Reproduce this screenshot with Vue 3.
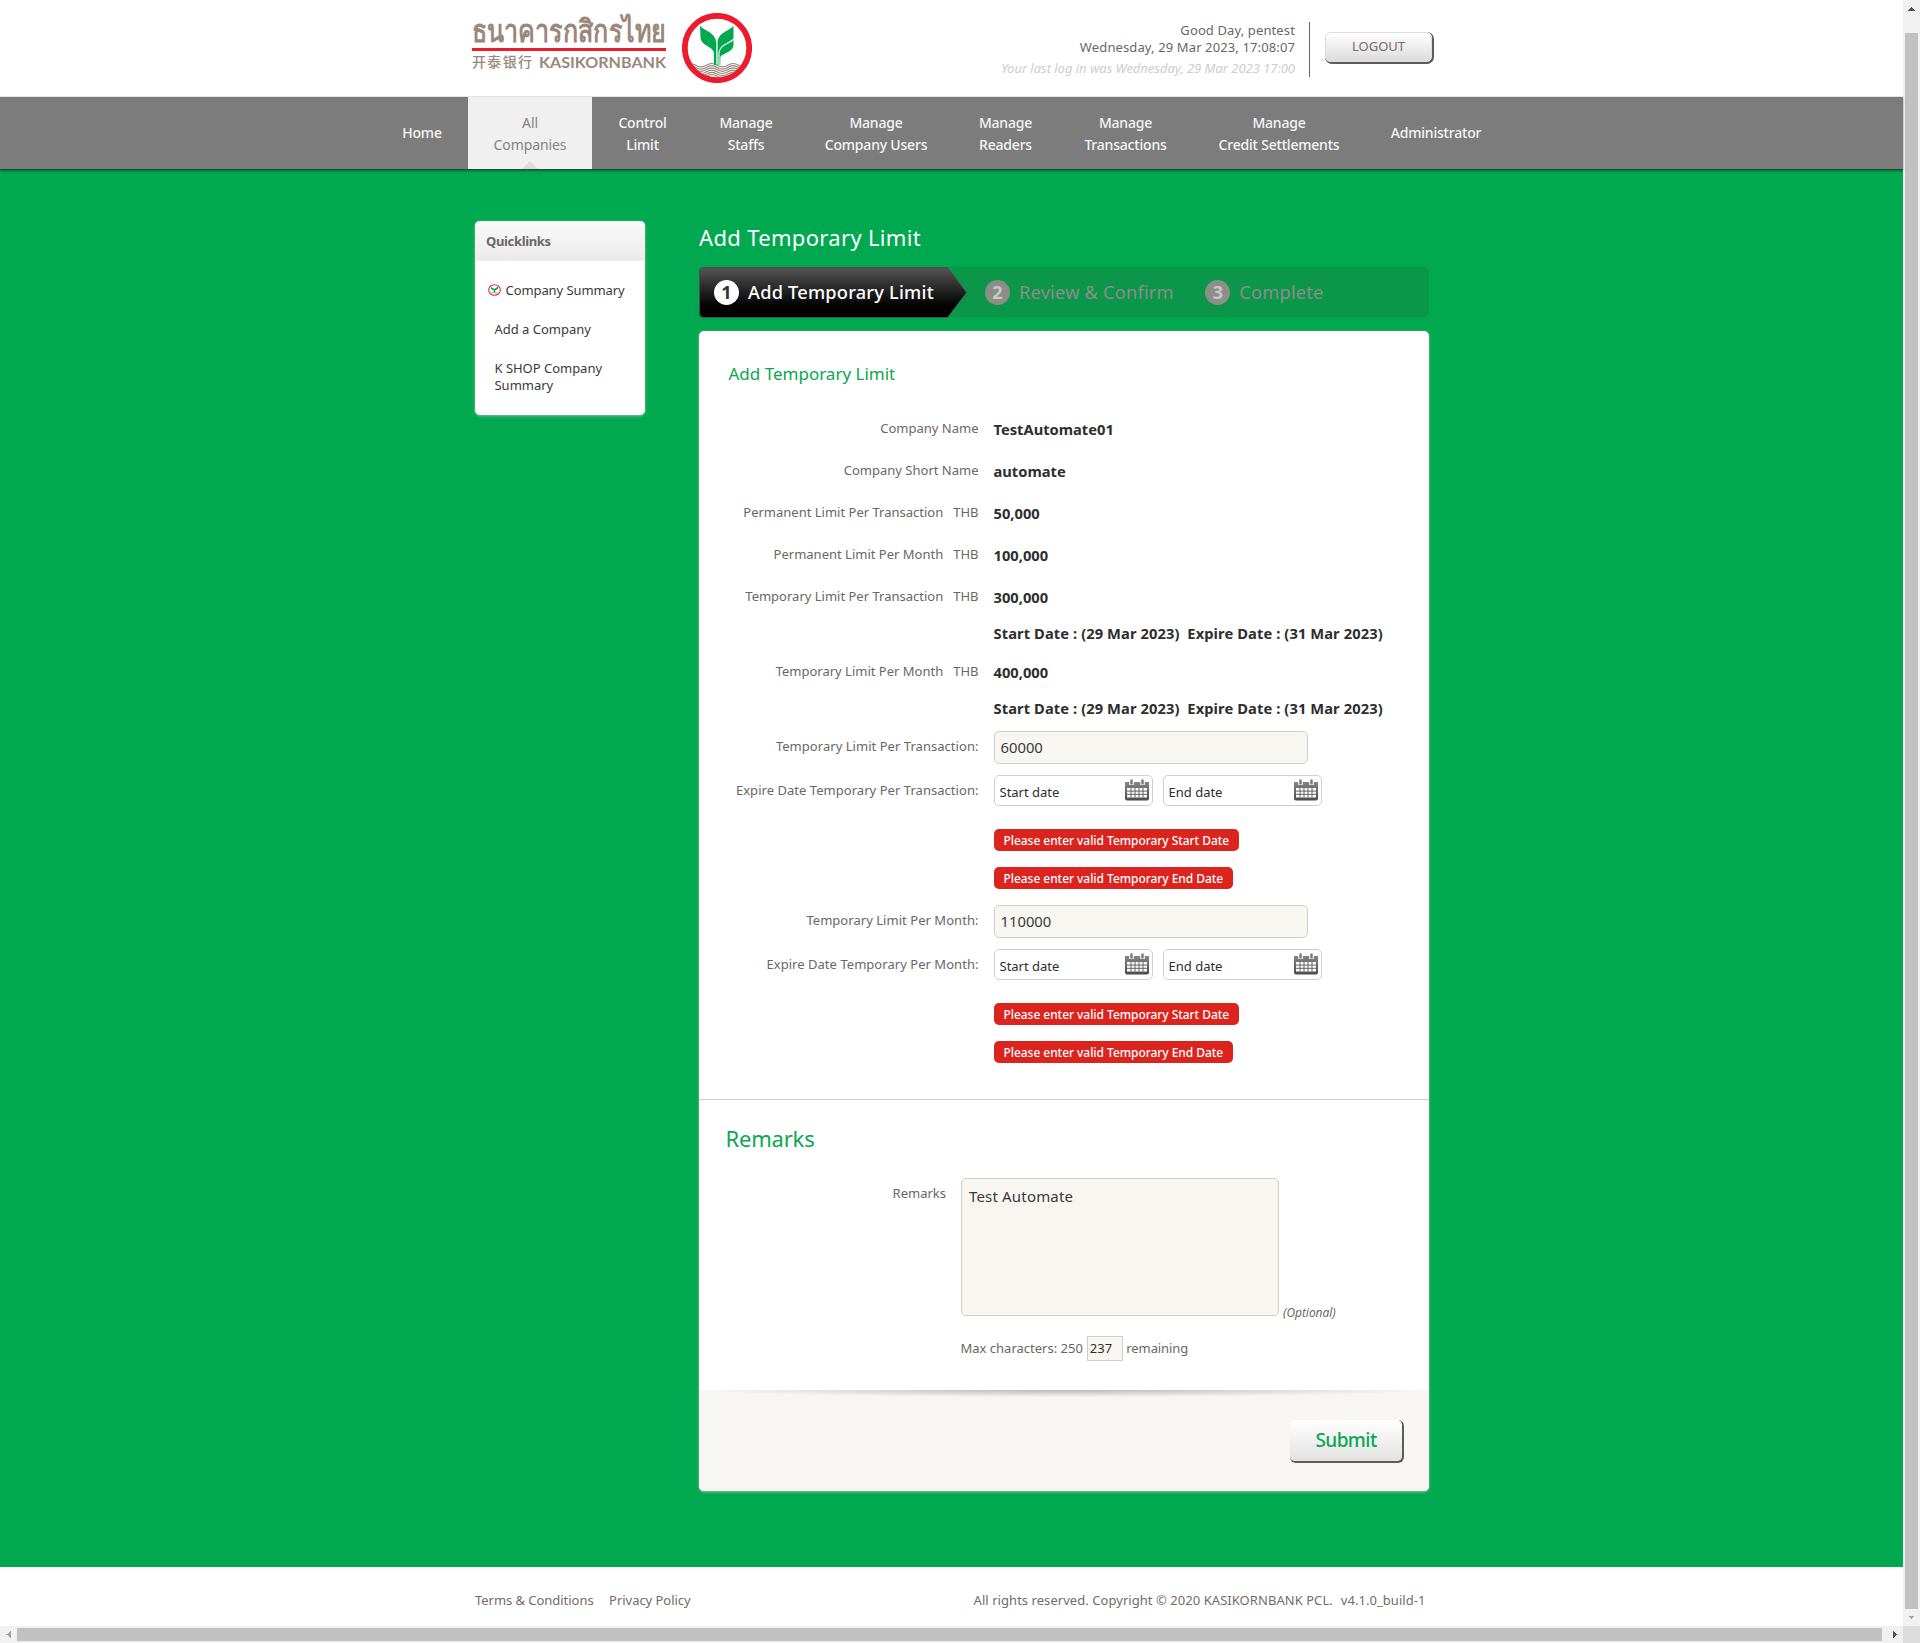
<script setup>
import { ref } from 'vue'

const navItems = [
  { lines: ['Home'], width: 92 },
  { lines: ['All', 'Companies'], width: 124, active: true },
  { lines: ['Control', 'Limit'], width: 101 },
  { lines: ['Manage', 'Staffs'], width: 106 },
  { lines: ['Manage', 'Company Users'], width: 154 },
  { lines: ['Manage', 'Readers'], width: 105 },
  { lines: ['Manage', 'Transactions'], width: 135 },
  { lines: ['Manage', 'Credit Settlements'], width: 172 },
  { lines: ['Administrator'], width: 142 },
]

const steps = ['Add Temporary Limit', 'Review & Confirm', 'Complete']

const period = 'Start Date : (29 Mar 2023)  Expire Date : (31 Mar 2023)'
const details = [
  { label: 'Company Name', value: 'TestAutomate01' },
  { label: 'Company Short Name', value: 'automate' },
  { label: 'Permanent Limit Per Transaction', unit: 'THB', value: '50,000' },
  { label: 'Permanent Limit Per Month', unit: 'THB', value: '100,000' },
  { label: 'Temporary Limit Per Transaction', unit: 'THB', value: '300,000', period },
  { label: 'Temporary Limit Per Month', unit: 'THB', value: '400,000', period },
]

const limits = ref([
  { label: 'Temporary Limit Per Transaction:', dateLabel: 'Expire Date Temporary Per Transaction:', amount: '60000' },
  { label: 'Temporary Limit Per Month:', dateLabel: 'Expire Date Temporary Per Month:', amount: '110000' },
])
const errors = ['Please enter valid Temporary Start Date', 'Please enter valid Temporary End Date']
const remarks = ref('Test Automate')
</script>

<template>
  <div class="window">
    <div class="viewport">
      <div class="page">
        <header class="header">
          <div class="brand">
            <svg class="wordmark" width="196" height="62" viewBox="0 0 196 62">
              <text class="thai" x="0" y="32" textLength="194" lengthAdjust="spacingAndGlyphs">ธนาคารกสิกรไทย</text>
              <rect x="0" y="38" width="194" height="3" fill="#ec1c2e" />
              <text class="chinese" x="0" y="57" textLength="60">开泰银行</text>
              <text class="latin" x="67" y="58" textLength="127" lengthAdjust="spacingAndGlyphs">KASIKORNBANK</text>
            </svg>
            <svg class="emblem" width="70" height="70" viewBox="0 0 70 70">
              <clipPath id="disc"><circle cx="35" cy="35" r="29.5" /></clipPath>
              <circle cx="35" cy="35" r="32.2" fill="#fff" stroke="#ec1c2e" stroke-width="5.8" />
              <g clip-path="url(#disc)" fill="none" stroke="#98857a" stroke-width="1.15">
                <path v-for="n in 6" :key="n" :d="`M3 ${50 + n * 2.2} q5.3 -3.4 10.7 0 t10.7 0 t10.7 0 t10.7 0 t10.7 0 t10.7 0`" />
              </g>
              <g fill="#00a950">
                <path d="M18 12.5 C22 18 33 19 34.3 29 V52 H32 V40 C31 33 18.5 33 18.5 24 Z" />
                <path d="M51.5 12.5 C48 18 36.5 19 35.6 29 V52 H38.3 V44 C41 40 51.5 39 51.5 32 Z" />
              </g>
              <path d="M52 26 C47 31 38 31 37 40 V52" fill="none" stroke="#fff" stroke-width="1.1" />
            </svg>
          </div>
          <div class="session">
            <div class="greeting">
              <div>Good Day, pentest</div>
              <div>Wednesday, 29 Mar 2023, 17:08:07</div>
              <div class="last-login">Your last log in was Wednesday, 29 Mar 2023 17:00</div>
            </div>
            <button class="logout">LOGOUT</button>
          </div>
        </header>

        <nav class="nav">
          <a
            v-for="item in navItems"
            :key="item.lines.join(' ')"
            class="nav-item"
            :class="{ active: item.active, double: item.lines.length > 1 }"
            :style="{ width: item.width + 'px' }"
          >
            <span v-for="line in item.lines" :key="line">{{ line }}</span>
          </a>
        </nav>

        <main class="main">
          <aside class="quicklinks">
            <h3>Quicklinks</h3>
            <ul>
              <li class="current">
                <svg width="13" height="12" viewBox="0 0 13 12">
                  <ellipse cx="6.5" cy="6" rx="5.8" ry="5.3" fill="#fff" stroke="#e02a42" stroke-width="1.1" />
                  <path d="M3.6 8.6 q1.5 -.9 2.9 0 t2.9 0" fill="none" stroke="#98a39a" />
                  <path d="M3 3 L6.4 4.9 L10 2.6 V5 L7.2 6.6 V8.4 H5.8 V6.6 L3 5 Z" fill="#00a950" />
                </svg>
                <span>Company Summary</span>
              </li>
              <li>Add a Company</li>
              <li>K SHOP Company<br />Summary</li>
            </ul>
          </aside>

          <section class="content">
            <h1>Add Temporary Limit</h1>
            <ol class="steps">
              <li v-for="(step, i) in steps" :key="step" :class="{ active: i === 0 }">
                <svg v-if="i === 0" class="arrow" width="269" height="51" viewBox="0 0 269 51">
                  <defs>
                    <linearGradient id="step-fill" x1="0" y1="0" x2="0" y2="1">
                      <stop offset="0" stop-color="#555" />
                      <stop offset=".78" stop-color="#000" />
                    </linearGradient>
                  </defs>
                  <path d="M5 .5 H248.5 L267.5 25.5 L248.5 50.5 H5 Q.5 50.5 .5 46 V5 Q.5 .5 5 .5 Z" fill="url(#step-fill)" stroke="#4a5048" />
                </svg>
                <span class="number">{{ i + 1 }}</span>
                <span class="step-name">{{ step }}</span>
              </li>
            </ol>

            <form class="card" @submit.prevent>
              <div class="details">
                <h2>Add Temporary Limit</h2>
                <template v-for="d in details" :key="d.label">
                  <div class="row" :class="{ tight: d.period }">
                    <div class="label">{{ d.label }}<span v-if="d.unit" class="unit">{{ d.unit }}</span></div>
                    <div class="value">{{ d.value }}</div>
                  </div>
                  <div v-if="d.period" class="row period"><div class="label"></div><div class="value">{{ d.period }}</div></div>
                </template>

                <div v-for="limit in limits" :key="limit.label" class="limit">
                  <div class="row amount">
                    <label class="label">{{ limit.label }}</label>
                    <input v-model="limit.amount" class="field" />
                  </div>
                  <div class="row dates">
                    <label class="label">{{ limit.dateLabel }}</label>
                    <div v-for="name in ['Start date', 'End date']" :key="name" class="date">
                      <span>{{ name }}</span>
                      <svg width="24" height="22" viewBox="0 0 24 22">
                        <defs>
                          <linearGradient id="cal" x1="0" y1="0" x2="0" y2="1">
                            <stop offset="0" stop-color="#858585" />
                            <stop offset="1" stop-color="#4c4c4c" />
                          </linearGradient>
                        </defs>
                        <path d="M0 3 H24 V19.5 Q24 21.5 22 21.5 H2 Q0 21.5 0 19.5 Z" fill="url(#cal)" />
                        <path d="M6.5 0 V6 M17.5 0 V6" stroke="#fff" stroke-width="4.6" />
                        <path d="M6.5 .4 V5.4 M17.5 .4 V5.4" stroke="#777" stroke-width="2.4" />
                        <path d="M2 9 H22 V18.5 H2 Z" fill="#fff" />
                        <path d="M2 12.1 H22 M2 15.3 H22 M6 9 V18.5 M10 9 V18.5 M14 9 V18.5 M18 9 V18.5" stroke="#626262" stroke-width="1" />
                      </svg>
                    </div>
                  </div>
                  <div v-for="error in errors" :key="error" class="row error-row">
                    <div class="label"></div>
                    <div class="error">{{ error }}</div>
                  </div>
                </div>
              </div>

              <div class="remarks">
                <h2>Remarks</h2>
                <div class="remarks-row">
                  <label>Remarks</label>
                  <textarea v-model="remarks"></textarea>
                  <em>(Optional)</em>
                </div>
                <div class="counter">
                  <span>Max characters: 250</span>
                  <span class="count">{{ 250 - remarks.length }}</span>
                  <span>remaining</span>
                </div>
              </div>

              <div class="actions">
                <button class="submit">Submit</button>
              </div>
            </form>
          </section>
        </main>

        <footer class="footer">
          <div class="links"><a>Terms &amp; Conditions</a><a>Privacy Policy</a></div>
          <div class="links version"><span>All rights reserved. Copyright © 2020 KASIKORNBANK PCL.</span><span>v4.1.0_build-1</span></div>
        </footer>
      </div>

      <div class="scroll-y">
        <svg width="17" height="17" viewBox="0 0 17 17" shape-rendering="crispEdges"><path d="M5 11 L8.5 7 L12 11 Z" fill="#505050" /></svg>
        <div class="thumb"></div>
        <svg width="17" height="17" viewBox="0 0 17 17" shape-rendering="crispEdges"><path d="M5 6.5 L8.5 10.5 L12 6.5 Z" fill="#a3a3a3" /></svg>
      </div>
    </div>
    <div class="scroll-x">
      <svg width="17" height="17" viewBox="0 0 17 17" shape-rendering="crispEdges"><path d="M10.5 5 L6.5 8.5 L10.5 12 Z" fill="#a3a3a3" /></svg>
      <div class="thumb"></div>
      <svg width="21" height="17" viewBox="0 0 21 17" shape-rendering="crispEdges"><path d="M11 5 L15 8.5 L11 12 Z" fill="#505050" /></svg>
      <div class="corner"></div>
    </div>
  </div>
</template>

<style>
body { margin: 0; overflow: hidden; }
</style>

<style scoped>
* { box-sizing: border-box; }
.window {
  width: 1920px;
  height: 1643px;
  display: flex;
  flex-direction: column;
  font-family: "Noto Sans", "Open Sans", "Noto Sans CJK SC", sans-serif;
  font-size: 13px;
  color: #6a6766;
}
.viewport { display: flex; height: 1626px; }
.page { width: 1903px; background: #fff; display: flex; flex-direction: column; }
h1, h2, h3, ul, ol { margin: 0; padding: 0; list-style: none; font-weight: 400; }

/* Header */
.header { height: 97px; padding: 0 470px 0 472px; display: flex; justify-content: space-between; border-bottom: 1px solid #ececec; }
.brand { display: flex; gap: 14px; padding-top: 10px; }
.emblem { margin: 3px 0 0; }
.wordmark { overflow: visible; flex: none; }
.thai { font-size: 31px; font-weight: 700; fill: #9b877b; }
.chinese { font: 500 14px "Noto Sans CJK SC", sans-serif; fill: #9b877b; }
.latin { font: 700 15.5px Lato, sans-serif; fill: #9b877b; }
.session { display: flex; padding-top: 22px; }
.greeting { height: 55px; width: 300px; padding-right: 14px; border-right: 1px solid #6e6462; line-height: 17px; text-align: right; letter-spacing: .12px; white-space: nowrap; box-sizing: content-box; }
.last-login { margin-top: 4px; color: #cdcdcd; font-style: italic; letter-spacing: -.03px; }
.logout {
  width: 107px; height: 30px; margin: 10px 1px 0 15px; padding: 0 0 3px;
  border: 1px solid #dedede; border-radius: 6px;
  background: linear-gradient(#fff, #dcdcdc);
  box-shadow: 1px 1px 0 1px #5c5c5c;
  font: 13px "Noto Sans", sans-serif; color: #786a66;
}

/* Navigation */
.nav { height: 73px; padding-left: 376px; display: flex; background: #7c7c7c; border-bottom: 1px solid #2c4734; box-shadow: 0 1px 2px rgba(0, 40, 10, .5); position: relative; }
.nav-item { position: relative; display: flex; flex-direction: column; align-items: center; justify-content: center; font-size: 14px; font-weight: 500; line-height: 22px; letter-spacing: -.2px; color: #f5f5f5; white-space: nowrap; }
.nav-item.double { padding-top: 2px; }
.nav-item.active { background: #f0f0f0; color: #868282; font-weight: 400; letter-spacing: -.1px; }
.nav-item.active::after { content: ""; position: absolute; bottom: 0; left: 54px; border: 8px solid transparent; border-top: 0; border-bottom-color: #e0dada; }

/* Body */
.main { height: 1397px; padding: 51px 474px 0 475px; display: flex; align-items: flex-start; gap: 54px; background: #00a950; }
.quicklinks { width: 170px; height: 194px; border-radius: 5px; background: #fff; box-shadow: 0 1px 3px rgba(200, 200, 200, .7); overflow: hidden; flex: none; }
.quicklinks h3 { height: 40px; padding-left: 11px; font-size: 13px; font-weight: 700; line-height: 40px; letter-spacing: -.35px; background: linear-gradient(#fafafa, #ebebeb); }
.quicklinks ul { padding: 21px 0 0 19.5px; color: #3a3a3a; line-height: 17px; letter-spacing: -.02px; }
.quicklinks li { margin-bottom: 22px; white-space: nowrap; }
.quicklinks li.current { margin-left: -7px; display: flex; align-items: flex-start; gap: 5px; letter-spacing: -.08px; }
.current svg { margin-top: 2px; }
.content { width: 730px; flex: none; }
h1 { height: 46px; font-size: 22px; line-height: 32px; letter-spacing: .33px; color: #fff; }

.steps { height: 50px; margin-bottom: 14px; display: flex; align-items: center; border-radius: 5px; background: #0c964a; font-size: 18.2px; letter-spacing: .22px; color: #8d8d89; }
.steps li { position: relative; display: flex; align-items: center; gap: 9px; margin-right: 31.5px; height: 50px; white-space: nowrap; }
.steps li.active { width: 269px; margin-right: 17px; padding-left: 15px; color: #fff; font-weight: 500; flex: none; }
.arrow { position: absolute; top: 0; left: 0; }
.number { position: relative; width: 25px; height: 25px; border-radius: 50%; background: #8d8d89; color: #c9c9c5; font-weight: 700; line-height: 25px; text-align: center; letter-spacing: 0; }
.active .number { background: #fff; color: #333; }
.step-name { position: relative; }

.card { height: 1160px; border-radius: 5px; background: #fff; box-shadow: 0 1px 3px rgba(190, 190, 190, .8); overflow: hidden; }
.details { height: 769px; padding-top: 30px; border-bottom: 1px solid #cccccc; }
.details h2 { height: 57px; padding-left: 29.5px; font-size: 17px; line-height: 25px; color: #0aa750; }
.row { display: flex; height: 42px; line-height: 20px; }
.label { width: 279.5px; margin-right: 15px; text-align: right; white-space: nowrap; flex: none; }
.unit { margin-left: 10px; }
.value { padding-top: 1px; font-size: 14.7px; font-weight: 700; color: #2e2e2e; white-space: pre; }
.row.period .value { letter-spacing: .09px; }
.row.tight { height: 36px; }
.row.period { height: 39px; }
.row.period + .limit { margin-top: -5px; }
.limit { height: 174px; }
.row.amount { height: 44px; }
.amount .label, .dates .label { padding-top: 5px; letter-spacing: .04px; }
.field { width: 314px; height: 33px; margin: 0; padding: 0 6px 2px; border: 1px solid #cfcfc8; border-radius: 5px; background: #f7f6f1; font: 14.8px "Noto Sans", sans-serif; color: #3a3a3a; outline: none; }
.row.dates { height: 54px; }
.date { width: 159px; height: 31px; margin-right: 10px; padding: 3px 3px 0 5px; display: flex; justify-content: space-between; border: 1px solid #cfcfcf; border-radius: 5px; color: #2e2e2e; line-height: 26px; }
.row.error-row { height: 38px; }
.error { height: 22px; padding: 0 10px; border-radius: 5px; background: #dc241f; color: #fff; font-size: 12px; font-weight: 500; line-height: 23px; letter-spacing: -.05px; white-space: nowrap; }

.remarks { height: 290px; padding-top: 21px; }
.remarks h2 { height: 57px; padding-left: 26.5px; font-size: 22px; line-height: 34px; letter-spacing: -.2px; color: #0aa750; }
.remarks-row { display: flex; height: 158px; }
.remarks-row label { width: 247px; margin-right: 15px; padding-top: 5px; line-height: 20px; text-align: right; }
.remarks-row textarea { width: 318px; height: 138px; margin: 0; padding: 7px; border: 1px solid #cfcfc8; border-radius: 5px; background: #f7f6f1; font: 15px/20px "Noto Sans", sans-serif; letter-spacing: .17px; color: #3a3a3a; resize: none; outline: none; }
.remarks-row em { margin: 124px 0 0 4px; font-size: 11.9px; line-height: 20px; }
.counter { display: flex; padding-left: 261.5px; line-height: 24px; }
.count { width: 36px; height: 25px; margin: 0 3.5px 0 4px; padding-left: 2px; border: 1px solid #cfcfc8; background: #f7f6f1; color: #2e2e2e; line-height: 22px; }
.count + span { letter-spacing: -.1px; }

.actions { height: 101px; padding: 30px 27px 0 0; display: flex; justify-content: flex-end; align-items: flex-start; background: radial-gradient(ellipse 360px 7px at 50% 0, #b9b9b7, rgba(247, 246, 243, 0)) #f7f6f3; }
.submit { width: 112px; height: 41px; padding: 0 0 1px; border: 0; border-radius: 5px; background: linear-gradient(#fff, #e2e2e2); box-shadow: 1px 1px 0 1px #5c5c5c; font: 500 19px "Noto Sans", sans-serif; letter-spacing: -.55px; color: #0aa750; }

/* Footer */
.footer { height: 59px; padding: 7px 477.5px 0 475px; display: flex; justify-content: space-between; align-items: center; color: #766a67; }
.links { display: flex; gap: 15.5px; letter-spacing: -.04px; white-space: nowrap; }
.links.version { gap: 8px; letter-spacing: .05px; }

/* Scrollbars */
.scroll-y { width: 17px; display: flex; flex-direction: column; background: #f1f1f1; }
.scroll-y .thumb { height: 1576px; margin: 16px 2px 0; background: #c1c1c1; }
.scroll-x { height: 17px; display: flex; background: #f1f1f1; }
.scroll-x .thumb { width: 1865px; margin: 2px 0; background: #c1c1c1; }
.corner { width: 17px; background: #dcdcdc; }
</style>
